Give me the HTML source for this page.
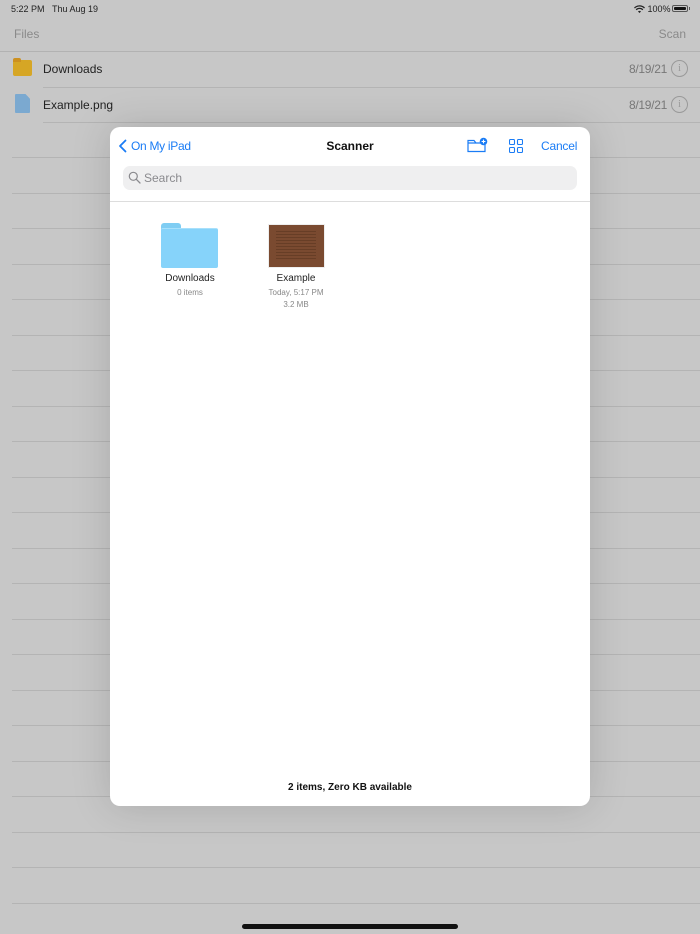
<!DOCTYPE html><html><head><style>
body{margin:0;width:700px;height:934px;background:#c7c7c7;font-family:"Liberation Sans",sans-serif;position:relative;overflow:hidden}
.abs{position:absolute}
.line{position:absolute;left:12px;right:0;height:1px;background:#b4b4b4}
.t{position:absolute;white-space:nowrap}
</style></head><body>
<div class="t" style="left:11px;top:4px;font-size:9px;color:#222">5:22 PM&nbsp;&nbsp;&nbsp;Thu Aug 19</div>
<div class="t" style="left:634px;top:4px;font-size:9px;color:#222">
<svg width="11" height="8" viewBox="0 0 11 8" style="vertical-align:-1px"><path d="M0.5 3A7 7 0 0 1 10.5 3M2.2 4.8A4.5 4.5 0 0 1 8.8 4.8" stroke="#222" stroke-width="1.3" fill="none"/><path d="M4 6.5L5.5 8L7 6.5A2 2 0 0 0 4 6.5Z" fill="#222"/></svg> 100%</div>
<div class="abs" style="left:672px;top:5px;width:16px;height:7px;border:1px solid #555;border-radius:2px;padding:1px;box-sizing:border-box"><div style="background:#111;width:100%;height:100%;border-radius:1px"></div></div>
<div class="abs" style="left:689px;top:7px;width:1px;height:3px;background:#555"></div>
<div class="t" style="left:14px;top:27px;font-size:12px;color:#8a8a8a">Files</div>
<div class="t" style="right:14px;top:27px;font-size:12px;color:#8a8a8a">Scan</div>
<div class="abs" style="left:0;right:0;top:51px;height:1px;background:#b2b2b2"></div>
<div class="abs" style="left:13px;top:60px;width:19px;height:16px;background:#d6a625;border-radius:2px"></div>
<div class="abs" style="left:13px;top:58px;width:8px;height:4px;background:#cc9020;border-radius:2px 2px 0 0"></div>
<div class="t" style="left:43px;top:62px;font-size:12px;color:#222">Downloads</div>
<div class="t" style="left:629px;top:62px;font-size:12px;color:#777;letter-spacing:-0.3px">8/19/21</div>
<div class="abs" style="left:671px;top:60px;width:15px;height:15px;border:1px solid #999;border-radius:50%;font:10px 'Liberation Serif';color:#999;text-align:center;line-height:15px">i</div>
<div class="abs" style="left:43px;right:0;top:87px;height:1px;background:#b4b4b4"></div>
<div class="abs" style="left:15px;top:94px;width:15px;height:19px;background:#7ba9d0;border-radius:1px;clip-path:polygon(0 0,70% 0,100% 25%,100% 100%,0 100%)"></div>
<div class="t" style="left:43px;top:98px;font-size:12px;color:#222">Example.png</div>
<div class="t" style="left:629px;top:98px;font-size:12px;color:#777;letter-spacing:-0.3px">8/19/21</div>
<div class="abs" style="left:671px;top:96px;width:15px;height:15px;border:1px solid #999;border-radius:50%;font:10px 'Liberation Serif';color:#999;text-align:center;line-height:15px">i</div>
<div class="abs" style="left:43px;right:0;top:122px;height:1px;background:#b4b4b4"></div>
<div class="line" style="top:157px"></div><div class="line" style="top:193px"></div><div class="line" style="top:228px"></div><div class="line" style="top:264px"></div><div class="line" style="top:299px"></div><div class="line" style="top:335px"></div><div class="line" style="top:370px"></div><div class="line" style="top:406px"></div><div class="line" style="top:441px"></div><div class="line" style="top:477px"></div><div class="line" style="top:512px"></div><div class="line" style="top:548px"></div><div class="line" style="top:583px"></div><div class="line" style="top:619px"></div><div class="line" style="top:654px"></div><div class="line" style="top:690px"></div><div class="line" style="top:725px"></div><div class="line" style="top:761px"></div><div class="line" style="top:796px"></div><div class="line" style="top:832px"></div><div class="line" style="top:867px"></div><div class="line" style="top:903px"></div>
<div class="abs" style="left:242px;top:924px;width:216px;height:5px;background:#111;border-radius:3px"></div>

<div class="abs" style="left:110px;top:127px;width:480px;height:679px;background:#fff;border-radius:10px;box-shadow:0 0 40px rgba(0,0,0,0.15);overflow:hidden">
 <svg class="abs" style="left:8px;top:12px" width="10" height="14" viewBox="0 0 10 14"><path d="M7.5 1.5L2 7L7.5 12.5" stroke="#1a7cf5" stroke-width="1.8" fill="none" stroke-linecap="round" stroke-linejoin="round"/></svg>
 <div class="t" style="left:21px;top:12px;font-size:12px;color:#1a7cf5;letter-spacing:-0.3px">On My iPad</div>
 <div class="t" style="left:0;width:480px;text-align:center;top:12px;font-size:12px;font-weight:bold;color:#111">Scanner</div>
 <svg class="abs" style="left:357px;top:10px" width="21" height="16" viewBox="0 0 21 16"><path d="M1 3.5V14.5H18V6H9L7 3.5Z M1 6H18" stroke="#1a7cf5" stroke-width="1.2" fill="none"/><circle cx="16.5" cy="4.5" r="3.8" fill="#1a7cf5"/><path d="M16.5 2.6V6.4M14.6 4.5H18.4" stroke="#fff" stroke-width="1.1"/></svg>
 <svg class="abs" style="left:399px;top:12px" width="14" height="14" viewBox="0 0 14 14"><g stroke="#1a7cf5" stroke-width="1.1" fill="none"><rect x="0.5" y="0.5" width="5" height="5" rx="1"/><rect x="8.5" y="0.5" width="5" height="5" rx="1"/><rect x="0.5" y="8.5" width="5" height="5" rx="1"/><rect x="8.5" y="8.5" width="5" height="5" rx="1"/></g></svg>
 <div class="t" style="left:431px;top:12px;font-size:12px;color:#1a7cf5;letter-spacing:-0.2px">Cancel</div>
 <div class="abs" style="left:13px;top:39px;width:454px;height:24px;background:#efeff0;border-radius:7px"></div>
 <svg class="abs" style="left:18px;top:44px" width="13" height="13" viewBox="0 0 13 13"><circle cx="5.3" cy="5.3" r="4" stroke="#8a8a8e" stroke-width="1.2" fill="none"/><path d="M8.3 8.3L12 12" stroke="#8a8a8e" stroke-width="1.3" stroke-linecap="round"/></svg>
 <div class="t" style="left:34px;top:44px;font-size:12px;color:#8a8a8e">Search</div>
 <div class="abs" style="left:0;right:0;top:74px;height:1px;background:#ddd"></div>
 <div class="abs" style="left:51px;top:96px;width:20px;height:8px;background:#7fcdf3;border-radius:3px 3px 0 0"></div>
 <div class="abs" style="left:51px;top:101px;width:57px;height:39px;background:#86d3fa;border-radius:2px;border-top:1px solid #a8e0fb"></div>
 <div class="t" style="left:40px;width:80px;text-align:center;top:146px;font-size:10px;color:#222">Downloads</div>
 <div class="t" style="left:40px;width:80px;text-align:center;top:161px;font-size:8px;color:#888">0 items</div>
 <div class="abs" style="left:158px;top:97px;width:57px;height:44px;background:#7a4a30;border:1px solid #eee;box-sizing:border-box"></div>
 <div class="abs" style="left:166px;top:104px;width:40px;height:30px;background:repeating-linear-gradient(#5a3520 0 1px,transparent 1px 3px);opacity:.6"></div>
 <div class="t" style="left:146px;width:80px;text-align:center;top:146px;font-size:10px;color:#222">Example</div>
 <div class="t" style="left:146px;width:80px;text-align:center;top:161px;font-size:8px;color:#888">Today, 5:17 PM</div>
 <div class="t" style="left:146px;width:80px;text-align:center;top:173px;font-size:8px;color:#888">3.2 MB</div>
 <div class="t" style="left:0;width:480px;text-align:center;top:655px;font-size:10px;font-weight:bold;color:#111">2 items, Zero KB available</div>
</div>
</body></html>
